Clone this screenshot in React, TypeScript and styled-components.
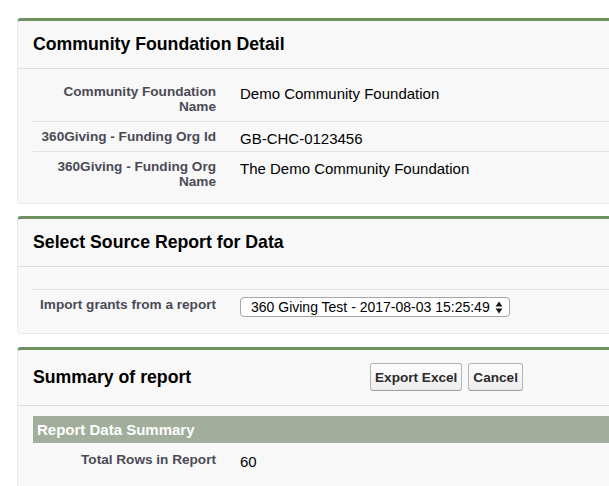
import React from "react";
import styled, { createGlobalStyle } from "styled-components";

const Global = createGlobalStyle`
  html, body { margin: 0; padding: 0; background: #ffffff; }
  body { font-family: "Liberation Sans", Arial, Helvetica, sans-serif; overflow: hidden; }
  * { box-sizing: border-box; }
`;

const Page = styled.div`
  width: 609px;
  height: 486px;
  overflow: hidden;
  padding: 18px 0 0 17px;
  display: flex;
  flex-direction: column;
  gap: 12px;
`;

const Panel = styled.section<{ $offset?: number }>`
  width: 640px;
  flex: none;
  margin-top: ${(p) => p.$offset ?? 0}px;
  background: #f8f8f8;
  border: 1px solid #eaeaea;
  border-top: 3px solid #6e915f;
  border-radius: 4px;
`;

const Header = styled.div<{ $tall?: boolean }>`
  display: flex;
  align-items: center;
  padding: ${(p) => (p.$tall ? "13px 15px 14px" : "12px 15px 13px")};
  border-bottom: 1px solid #dcdcdc;
`;

const Title = styled.h2<{ $width?: number }>`
  margin: 0;
  font-size: 17.7px;
  line-height: 22px;
  font-weight: bold;
  color: #000;
  flex: ${(p) => (p.$width ? `0 0 ${p.$width}px` : "1 1 auto")};
`;

const ButtonBar = styled.div`
  display: flex;
  gap: 6px;
`;

const Button = styled.button`
  height: 28px;
  padding: 0 4px;
  border: 1px solid #b5b5b5;
  border-bottom-color: #9f9f9f;
  border-radius: 3px;
  background: linear-gradient(#fefefe, #ededed);
  font-family: "Liberation Sans", Arial, sans-serif;
  font-size: 13.6px;
  font-weight: bold;
  color: #2b2b2b;
`;

const Body = styled.div<{ $top: number; $bottom: number }>`
  padding: ${(p) => p.$top}px 0 ${(p) => p.$bottom}px 15px;
`;

const DetailList = styled.div<{ $ruled?: boolean }>`
  border-top: ${(p) => (p.$ruled ? "1px solid #e3e3e3" : "none")};
`;

const Row = styled.div<{ $last?: boolean }>`
  display: grid;
  grid-template-columns: 183px 1fr;
  column-gap: 24px;
  border-bottom: ${(p) => (p.$last ? "none" : "1px solid #e3e3e3")};
`;

const Label = styled.div`
  text-align: right;
  font-size: 13.6px;
  line-height: 15px;
  font-weight: bold;
  color: #4a4a56;
  padding: 7px 0 7px;
`;

const Value = styled.div`
  font-size: 15px;
  line-height: 17px;
  color: #000;
  padding: 8px 0 4px;
`;

const SelectBox = styled.div`
  margin-top: -1px;
  width: 270px;
  height: 20px;
  border: 1px solid #a6a6a6;
  border-radius: 4px;
  background: #fff;
  display: flex;
  align-items: center;
  justify-content: space-between;
  padding: 0 6px 0 10px;
  font-size: 14px;
  color: #000;
  white-space: nowrap;
`;

const SectionBar = styled.div`
  height: 27px;
  margin-bottom: 2px;
  background: #a2ae9b;
  color: #fff;
  font-size: 15px;
  font-weight: bold;
  line-height: 27px;
  padding-left: 4px;
`;

const Arrows = () => (
  <svg width="8" height="13" viewBox="0 0 8 13" aria-hidden="true">
    <path d="M4 0.5 L7.5 5.5 L0.5 5.5 Z" fill="#1a1a1a" />
    <path d="M0.5 7.5 L7.5 7.5 L4 12.5 Z" fill="#1a1a1a" />
  </svg>
);

const detailRows = [
  { label: "Community Foundation Name", value: "Demo Community Foundation" },
  { label: "360Giving - Funding Org Id", value: "GB-CHC-0123456" },
  { label: "360Giving - Funding Org Name", value: "The Demo Community Foundation" },
];

export default function App() {
  return (
    <>
      <Global />
      <Page>
        <Panel>
          <Header>
            <Title>Community Foundation Detail</Title>
          </Header>
          <Body $top={8} $bottom={7}>
            <DetailList>
              {detailRows.map((r, i) => (
                <Row key={r.label} $last={i === detailRows.length - 1}>
                  <Label>{r.label}</Label>
                  <Value>{r.value}</Value>
                </Row>
              ))}
            </DetailList>
          </Body>
        </Panel>

        <Panel>
          <Header>
            <Title>Select Source Report for Data</Title>
          </Header>
          <Body $top={22} $bottom={12}>
            <DetailList $ruled>
              <Row $last>
                <Label>Import grants from a report</Label>
                <Value>
                  <SelectBox role="combobox">
                    <span>360 Giving Test - 2017-08-03 15:25:49</span>
                    <Arrows />
                  </SelectBox>
                </Value>
              </Row>
            </DetailList>
          </Body>
        </Panel>

        <Panel $offset={1}>
          <Header $tall>
            <Title $width={337}>Summary of report</Title>
            <ButtonBar>
              <Button>Export Excel</Button>
              <Button>Cancel</Button>
            </ButtonBar>
          </Header>
          <Body $top={10} $bottom={20}>
            <SectionBar>Report Data Summary</SectionBar>
            <DetailList>
              <Row $last>
                <Label>Total Rows in Report</Label>
                <Value>60</Value>
              </Row>
            </DetailList>
          </Body>
        </Panel>
      </Page>
    </>
  );
}
